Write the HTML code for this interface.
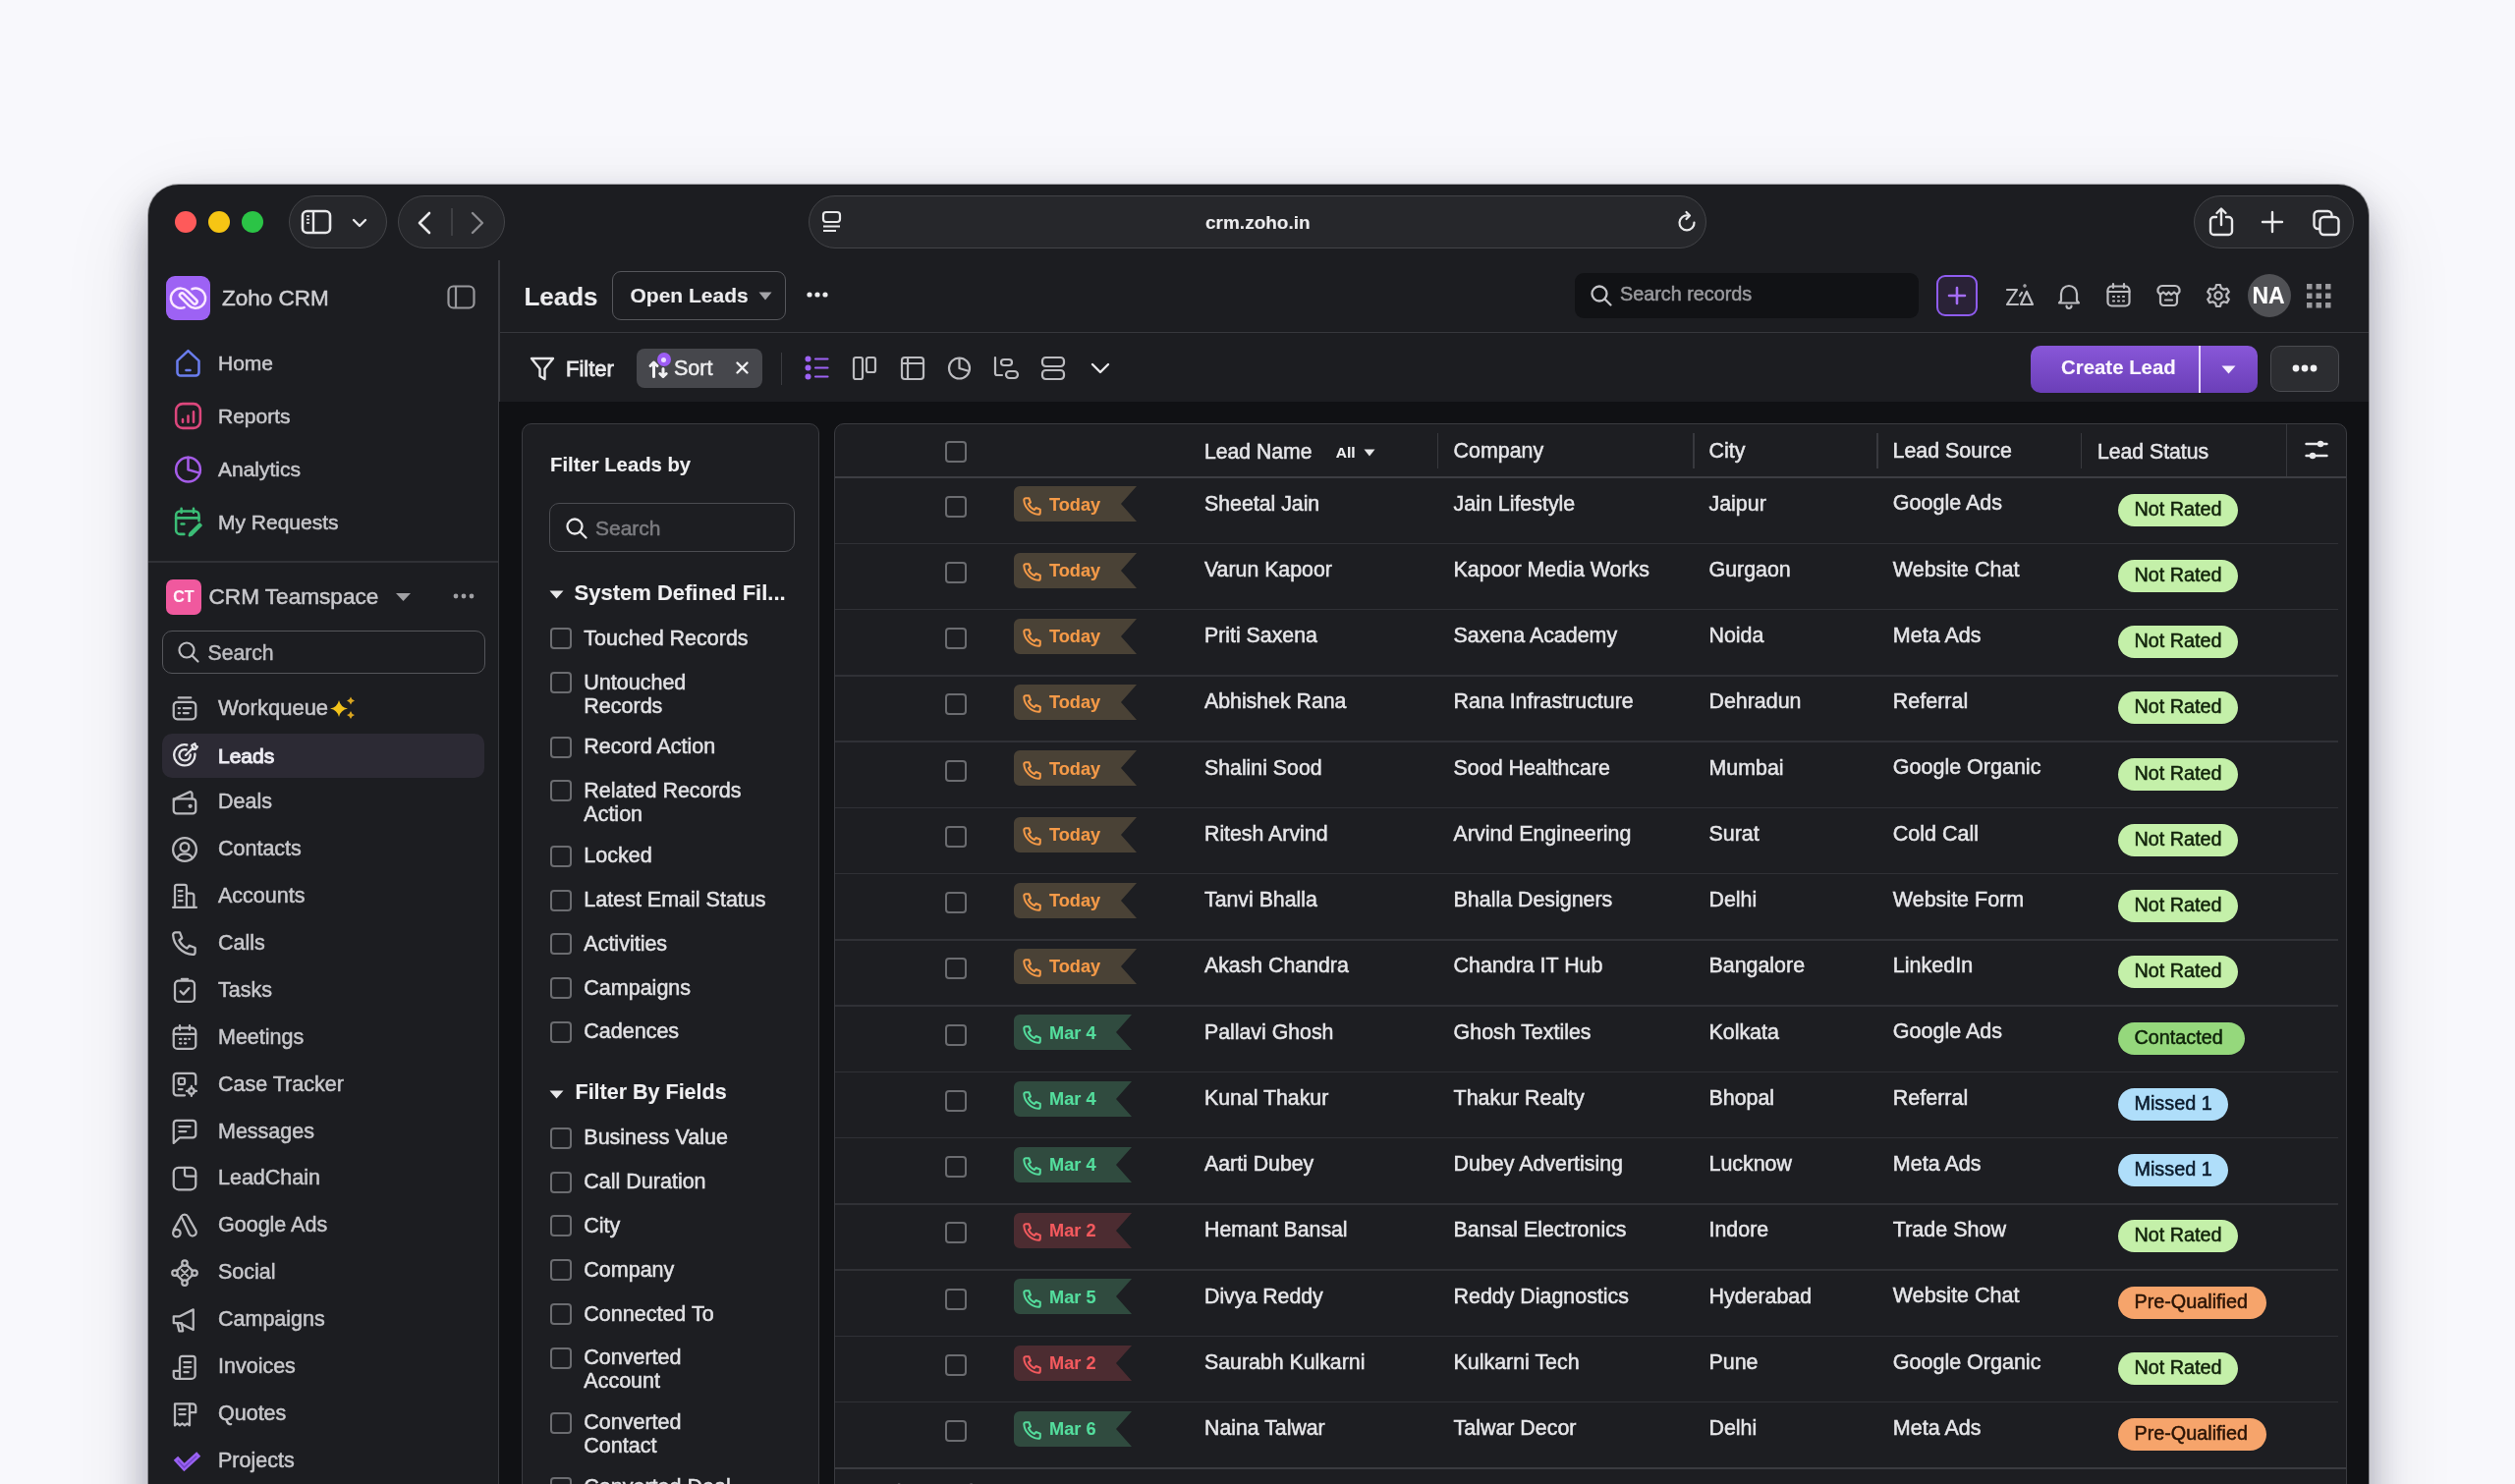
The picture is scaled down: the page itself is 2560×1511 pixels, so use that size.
<!DOCTYPE html>
<html><head><meta charset="utf-8">
<style>
*{box-sizing:border-box;margin:0;padding:0}
html,body{width:2560px;height:1511px;overflow:hidden}
body{will-change:transform;background:#f8f8fb;font-family:"Liberation Sans",sans-serif;position:relative;color:#d4d4d8}
.a{position:absolute}
.win{left:150.5px;top:188px;width:2260.5px;height:1500px;background:#1c1d21;border-radius:31px 31px 0 0;box-shadow:0 0 0 1px rgba(0,0,0,.3),0 20px 38px rgba(20,20,40,.32),0 30px 90px rgba(20,20,40,.12)}
.pill{background:#26272b;border:1.5px solid #434448;border-radius:27px}
svg{position:absolute;overflow:visible}
.t{position:absolute;white-space:nowrap;line-height:1;-webkit-text-stroke:0.5px currentColor}
.cb{position:absolute;width:22px;height:22px;border:2px solid #6b6c70;border-radius:4px}
.root{position:absolute;left:0;top:0;width:2560px;height:1511px;overflow:hidden;background:#f8f8fc}
</style></head><body>
<div class="root">
<div class="a win"></div>
<div class="a" style="left:177.5px;top:215px;width:22px;height:22px;border-radius:50%;background:#fe5a5a"></div>
<div class="a" style="left:211.5px;top:215px;width:22px;height:22px;border-radius:50%;background:#f6c514"></div>
<div class="a" style="left:246px;top:215px;width:22px;height:22px;border-radius:50%;background:#2bc446"></div>
<div class="a pill" style="left:294px;top:199px;width:100px;height:54px"></div>
<div class="a pill" style="left:405px;top:199px;width:109px;height:54px"></div>
<div class="a pill" style="left:823px;top:199px;width:914px;height:54px"></div>
<div class="a pill" style="left:2233px;top:199px;width:163px;height:54px"></div>
<svg style="left:306px;top:213px;" width="32" height="26" viewBox="0 0 32 26" fill="none"><rect x="2" y="2" width="28" height="22" rx="4.5" stroke="#e8e8ea" stroke-width="2.6"/><line x1="13" y1="2" x2="13" y2="24" stroke="#e8e8ea" stroke-width="2.4"/><line x1="6" y1="7" x2="9" y2="7" stroke="#e8e8ea" stroke-width="1.6"/><line x1="6" y1="10.5" x2="9" y2="10.5" stroke="#e8e8ea" stroke-width="1.6"/><line x1="6" y1="14" x2="9" y2="14" stroke="#e8e8ea" stroke-width="1.6"/></svg>
<svg style="left:358px;top:222px;" width="16" height="10" viewBox="0 0 16 10" fill="none"><path d="M2 2 L8 8 L14 2" stroke="#e8e8ea" stroke-width="2.4" stroke-linecap="round" stroke-linejoin="round"/></svg>
<svg style="left:424px;top:215px;" width="16" height="24" viewBox="0 0 16 24" fill="none"><path d="M13 2 L3 12 L13 22" stroke="#e8e8ea" stroke-width="2.6" stroke-linecap="round" stroke-linejoin="round"/></svg>
<div class="a" style="left:459px;top:212px;width:1.5px;height:28px;background:#3e3f43"></div>
<svg style="left:478px;top:215px;" width="16" height="24" viewBox="0 0 16 24" fill="none"><path d="M3 2 L13 12 L3 22" stroke="#8c8c90" stroke-width="2.4" stroke-linecap="round" stroke-linejoin="round"/></svg>
<svg style="left:835px;top:214px;" width="24" height="24" viewBox="0 0 24 24" fill="none"><rect x="3" y="2" width="17" height="10" rx="3" stroke="#e8e8ea" stroke-width="2.2"/><line x1="3" y1="16.5" x2="20" y2="16.5" stroke="#e8e8ea" stroke-width="2"/><line x1="3" y1="21" x2="16" y2="21" stroke="#e8e8ea" stroke-width="2"/></svg>
<div class="t" style="left:1227.0px;top:216.9px;font-size:19px;color:#ececee;font-weight:700;-webkit-text-stroke:0.1px currentColor;">crm.zoho.in</div>
<svg style="left:1707px;top:215px;" width="22" height="24" viewBox="0 0 22 24" fill="none"><path d="M17.5 11.5 A7.5 7.5 0 1 1 11 4.5" stroke="#e8e8ea" stroke-width="2.2" stroke-linecap="round"/><path d="M9.5 1 L13 4.5 L9.5 8" stroke="#e8e8ea" stroke-width="2.2" stroke-linecap="round" stroke-linejoin="round"/></svg>
<svg style="left:2247px;top:210px;" width="28" height="32" viewBox="0 0 28 32" fill="none"><path d="M9 11 H6.5 A3.5 3.5 0 0 0 3 14.5 V25.5 A3.5 3.5 0 0 0 6.5 29 H21.5 A3.5 3.5 0 0 0 25 25.5 V14.5 A3.5 3.5 0 0 0 21.5 11 H19" stroke="#e8e8ea" stroke-width="2.4" stroke-linecap="round"/><path d="M14 19 V3 M9.5 7 L14 2.5 L18.5 7" stroke="#e8e8ea" stroke-width="2.4" stroke-linecap="round" stroke-linejoin="round"/></svg>
<svg style="left:2302px;top:215px;" width="22" height="22" viewBox="0 0 22 22" fill="none"><path d="M11 1 V21 M1 11 H21" stroke="#e8e8ea" stroke-width="2.4" stroke-linecap="round"/></svg>
<svg style="left:2353px;top:213px;" width="30" height="28" viewBox="0 0 30 28" fill="none"><rect x="2.5" y="2" width="18" height="18" rx="4" stroke="#e8e8ea" stroke-width="2.4"/><rect x="8.5" y="8" width="19" height="18" rx="4" fill="#26272b" stroke="#e8e8ea" stroke-width="2.4"/></svg>
<div class="a" style="left:507px;top:265px;width:1.5px;height:1300px;background:#38393e"></div>
<div class="a" style="left:169px;top:281px;width:45px;height:45px;border-radius:9px;background:#9d62f4"></div>
<svg style="left:169px;top:281px;" width="45" height="45" viewBox="0 0 45 45" fill="none"><path d="M18.52 32.13 A10.1 10.1 0 1 1 22.04 15.56 L30.97 24.49 A2.36 2.36 0 0 1 27.63 27.83 L17.94 18.14 A2.36 2.36 0 0 0 14.60 21.48 L22.96 29.84 A10.1 10.1 0 1 0 26.48 13.27" stroke="#fbe8ff" stroke-width="2.5" stroke-linecap="round" stroke-linejoin="round" fill="none"/></svg>
<div class="t" style="left:226.0px;top:292.5px;font-size:22.5px;color:#cfcfd3;font-weight:400;">Zoho CRM</div>
<svg style="left:455px;top:290px;" width="29" height="25" viewBox="0 0 29 25" fill="none"><rect x="1.5" y="1.5" width="26" height="22" rx="5" stroke="#98989c" stroke-width="2.2"/><line x1="9" y1="2" x2="9" y2="23" stroke="#98989c" stroke-width="2.2"/></svg>
<svg style="left:175.0px;top:353.4px;" width="33" height="33" viewBox="0 0 24 24" fill="none"><g stroke="#6a7ded" stroke-width="1.85" stroke-linecap="round" stroke-linejoin="round" fill="none"><path d="M4 10.5 L12 3 L20 10.5 V19 A2.5 2.5 0 0 1 17.5 21.5 H6.5 A2.5 2.5 0 0 1 4 19 Z"/><path d="M10.5 17.5 H13.5"/></g></svg>
<div class="t" style="left:222.0px;top:359.4px;font-size:21px;color:#c8c8cc;font-weight:400;">Home</div>
<svg style="left:175.0px;top:407.2px;" width="33" height="33" viewBox="0 0 24 24" fill="none"><g stroke="#dc477c" stroke-width="1.85" stroke-linecap="round" stroke-linejoin="round" fill="none"><rect x="3" y="3" width="18" height="18" rx="5"/><path d="M8 16.5 V14.5 M12 16.5 V12 M16 16.5 V9"/></g></svg>
<div class="t" style="left:222.0px;top:413.2px;font-size:21px;color:#c8c8cc;font-weight:400;">Reports</div>
<svg style="left:175.0px;top:460.8px;" width="33" height="33" viewBox="0 0 24 24" fill="none"><g stroke="#a55ce8" stroke-width="1.85" stroke-linecap="round" stroke-linejoin="round" fill="none"><circle cx="12" cy="12.5" r="9"/><path d="M12 3.5 V12.5 L20.5 15"/></g></svg>
<div class="t" style="left:222.0px;top:466.8px;font-size:21px;color:#c8c8cc;font-weight:400;">Analytics</div>
<svg style="left:175.0px;top:514.8000000000001px;" width="33" height="33" viewBox="0 0 24 24" fill="none"><g stroke="#3bbd76" stroke-width="1.85" stroke-linecap="round" stroke-linejoin="round" fill="none"><path d="M20 11 V7 A3 3 0 0 0 17 4 H6 A3 3 0 0 0 3 7 V18 A3 3 0 0 0 6 21 H9"/><path d="M3 9 H20"/><path d="M7 2 V5 M16 2 V5"/><path d="M7 13.5 H9"/><path d="M20.5 13.5 L13.5 20.5 L13 22 L14.5 21.5 L21.5 14.5 Z"/></g></svg>
<div class="t" style="left:222.0px;top:520.8px;font-size:21px;color:#c8c8cc;font-weight:400;">My Requests</div>
<div class="a" style="left:151px;top:571px;width:356px;height:1.5px;background:#303136"></div>
<div class="a" style="left:169px;top:589.5px;width:36px;height:36px;border-radius:7px;background:#f0599e"></div>
<div class="t" style="left:176.2px;top:599.7px;font-size:16px;color:#fff4fa;font-weight:700;-webkit-text-stroke:0.1px currentColor;">CT</div>
<div class="t" style="left:212.5px;top:596.7px;font-size:22.6px;color:#c8c8cc;font-weight:400;">CRM Teamspace</div>
<svg style="left:402px;top:603px;" width="17" height="10" viewBox="0 0 17 10" fill="none"><path d="M1 1 H16 L8.5 9 Z" fill="#a0a0a4"/></svg>
<svg style="left:461px;top:604px;" width="22" height="6" viewBox="0 0 22 6" fill="none"><circle cx="3" cy="3" r="2.4" fill="#a0a0a4"/><circle cx="11" cy="3" r="2.4" fill="#a0a0a4"/><circle cx="19" cy="3" r="2.4" fill="#a0a0a4"/></svg>
<div class="a" style="left:165px;top:642px;width:329px;height:44px;border:1.5px solid #55565b;border-radius:10px"></div>
<svg style="left:180px;top:652px;" width="24" height="24" viewBox="0 0 24 24" fill="none"><circle cx="10" cy="10" r="7.5" stroke="#bdbdc1" stroke-width="2.2"/><path d="M15.5 15.5 L21.5 21.5" stroke="#bdbdc1" stroke-width="2.2" stroke-linecap="round"/></svg>
<div class="t" style="left:211.5px;top:653.5px;font-size:21.2px;color:#bdbdc1;font-weight:400;">Search</div>
<div class="a" style="left:165px;top:747px;width:328px;height:45px;border-radius:10px;background:#2c2a34"></div>
<svg style="left:173.3px;top:705.8px;" width="30" height="30" viewBox="0 0 24 24" fill="none"><g stroke="#b9b9bd" stroke-width="1.8" stroke-linecap="round" stroke-linejoin="round" fill="none"><rect x="3" y="7" width="18" height="14" rx="3"/><path d="M7 3.5 H17"/><path d="M7 12 H8 M11 12 H17 M7 16 H8 M11 16 H15"/></g></svg>
<div class="t" style="left:222.0px;top:709.8px;font-size:22px;color:#c8c8cc;font-weight:400;">Workqueue</div>
<svg style="left:173.5px;top:753.52px;" width="30" height="30" viewBox="0 0 24 24" fill="none"><g stroke="#e4e4e8" stroke-width="1.85" stroke-linecap="round" stroke-linejoin="round" fill="none"><path d="M19.5 11 A8.5 8.5 0 1 1 13 3.6"/><path d="M15.8 11.5 A4.5 4.5 0 1 1 12.5 7.5"/><path d="M12 12 L18 6"/><path d="M17 4 L19.5 2.5 L20 4.5 L21.5 5 L20 7 L18 7 Z"/></g></svg>
<div class="t" style="left:222.0px;top:758.5px;font-size:21px;color:#ecebf2;font-weight:400;-webkit-text-stroke:1px #ecebf2">Leads</div>
<svg style="left:173.3px;top:801.64px;" width="30" height="30" viewBox="0 0 24 24" fill="none"><g stroke="#b9b9bd" stroke-width="1.8" stroke-linecap="round" stroke-linejoin="round" fill="none"><path d="M3 9 V18.5 A2.5 2.5 0 0 0 5.5 21 H18.5 A2.5 2.5 0 0 0 21 18.5 V11.5 A2.5 2.5 0 0 0 18.5 9 H5.5 A2.5 2.5 0 0 0 3 11.5"/><path d="M4 9 L16 3.5 A1.5 1.5 0 0 1 18 5 V9"/><circle cx="16.5" cy="15" r="0.8"/></g></svg>
<div class="t" style="left:222.0px;top:806.0px;font-size:21.5px;color:#c8c8cc;font-weight:400;">Deals</div>
<svg style="left:173.3px;top:849.56px;" width="30" height="30" viewBox="0 0 24 24" fill="none"><g stroke="#b9b9bd" stroke-width="1.8" stroke-linecap="round" stroke-linejoin="round" fill="none"><circle cx="12" cy="12" r="9.5"/><circle cx="12" cy="10" r="3.5"/><path d="M6 18.5 A6.5 5 0 0 1 18 18.5"/></g></svg>
<div class="t" style="left:222.0px;top:854.0px;font-size:21.5px;color:#c8c8cc;font-weight:400;">Contacts</div>
<svg style="left:173.3px;top:897.4799999999999px;" width="30" height="30" viewBox="0 0 24 24" fill="none"><g stroke="#b9b9bd" stroke-width="1.8" stroke-linecap="round" stroke-linejoin="round" fill="none"><path d="M4 21.5 V4.5 A1.5 1.5 0 0 1 5.5 3 H12 A1.5 1.5 0 0 1 13.5 4.5 V21.5"/><path d="M13.5 10 H17.5 A2 2 0 0 1 19.5 12 V21.5"/><path d="M2.5 21.5 H21.5"/><path d="M7 8 H10 M7 12 H10 M7 16 H10"/></g></svg>
<div class="t" style="left:222.0px;top:901.9px;font-size:21.5px;color:#c8c8cc;font-weight:400;">Accounts</div>
<svg style="left:173.3px;top:945.4px;" width="30" height="30" viewBox="0 0 24 24" fill="none"><g stroke="#b9b9bd" stroke-width="1.8" stroke-linecap="round" stroke-linejoin="round" fill="none"><path d="M4.5 3.5 H8 L9.8 8.2 L7.5 10 C8.6 12.5 11.2 15.2 14 16.5 L15.8 14.2 L20.5 16 V19.5 A2 2 0 0 1 18.5 21.5 C10 21 3 14 2.5 5.5 A2 2 0 0 1 4.5 3.5 Z"/></g></svg>
<div class="t" style="left:222.0px;top:949.8px;font-size:21.5px;color:#c8c8cc;font-weight:400;">Calls</div>
<svg style="left:173.3px;top:993.3199999999999px;" width="30" height="30" viewBox="0 0 24 24" fill="none"><g stroke="#b9b9bd" stroke-width="1.8" stroke-linecap="round" stroke-linejoin="round" fill="none"><rect x="4" y="4.5" width="16" height="17" rx="3"/><path d="M9.5 3 H14.5"/><path d="M8.5 13 L11 15.5 L15.5 10.5"/></g></svg>
<div class="t" style="left:222.0px;top:997.7px;font-size:21.5px;color:#c8c8cc;font-weight:400;">Tasks</div>
<svg style="left:173.3px;top:1041.24px;" width="30" height="30" viewBox="0 0 24 24" fill="none"><g stroke="#b9b9bd" stroke-width="1.8" stroke-linecap="round" stroke-linejoin="round" fill="none"><rect x="3" y="4.5" width="18" height="17" rx="3"/><path d="M3 9.5 H21"/><path d="M8 2.5 V6 M16 2.5 V6"/><path d="M8 13.5 H9 M12 13.5 H13 M15.5 13.5 H16 M8 17 H9 M12 17 H13"/></g></svg>
<div class="t" style="left:222.0px;top:1045.6px;font-size:21.5px;color:#c8c8cc;font-weight:400;">Meetings</div>
<svg style="left:173.3px;top:1089.16px;" width="30" height="30" viewBox="0 0 24 24" fill="none"><g stroke="#b9b9bd" stroke-width="1.8" stroke-linecap="round" stroke-linejoin="round" fill="none"><path d="M21 12 V5.5 A2.5 2.5 0 0 0 18.5 3 H5.5 A2.5 2.5 0 0 0 3 5.5 V18.5 A2.5 2.5 0 0 0 5.5 21 H12"/><rect x="7" y="7" width="5" height="5" rx="1"/><path d="M7 16 H10"/><circle cx="17.5" cy="17.5" r="2.2"/><path d="M17.5 13.5 V14.5 M17.5 20.5 V21.5 M13.5 17.5 H14.5 M20.5 17.5 H21.5"/></g></svg>
<div class="t" style="left:222.0px;top:1093.6px;font-size:21.5px;color:#c8c8cc;font-weight:400;">Case Tracker</div>
<svg style="left:173.3px;top:1137.0800000000002px;" width="30" height="30" viewBox="0 0 24 24" fill="none"><g stroke="#b9b9bd" stroke-width="1.8" stroke-linecap="round" stroke-linejoin="round" fill="none"><path d="M3 5.5 A2.5 2.5 0 0 1 5.5 3 H18.5 A2.5 2.5 0 0 1 21 5.5 V14.5 A2.5 2.5 0 0 1 18.5 17 H8 L3 21.5 Z"/><path d="M7.5 8 H16.5 M7.5 12 H13"/></g></svg>
<div class="t" style="left:222.0px;top:1141.5px;font-size:21.5px;color:#c8c8cc;font-weight:400;">Messages</div>
<svg style="left:173.3px;top:1185.0px;" width="30" height="30" viewBox="0 0 24 24" fill="none"><g stroke="#b9b9bd" stroke-width="1.8" stroke-linecap="round" stroke-linejoin="round" fill="none"><rect x="3" y="3" width="18" height="18" rx="4"/><path d="M12 3 V8.5 A1.5 1.5 0 0 0 13.5 10 H21"/></g></svg>
<div class="t" style="left:222.0px;top:1189.4px;font-size:21.5px;color:#c8c8cc;font-weight:400;">LeadChain</div>
<svg style="left:173.3px;top:1232.92px;" width="30" height="30" viewBox="0 0 24 24" fill="none"><g stroke="#b9b9bd" stroke-width="1.8" stroke-linecap="round" stroke-linejoin="round" fill="none"><path d="M9.2 4.5 A3 3 0 0 1 14.6 4.5 L21 15.8 A3 3 0 0 1 15.8 18.8 Z"/><path d="M9.2 4.5 L3 15.5"/><circle cx="5.5" cy="18" r="3"/></g></svg>
<div class="t" style="left:222.0px;top:1237.3px;font-size:21.5px;color:#c8c8cc;font-weight:400;">Google Ads</div>
<svg style="left:173.3px;top:1280.8400000000001px;" width="30" height="30" viewBox="0 0 24 24" fill="none"><g stroke="#b9b9bd" stroke-width="1.8" stroke-linecap="round" stroke-linejoin="round" fill="none"><circle cx="12" cy="4" r="2.2"/><circle cx="12" cy="20" r="2.2"/><circle cx="4" cy="12" r="2.2"/><circle cx="20" cy="12" r="2.2"/><path d="M10.5 5.5 L5.5 10.5 M13.5 5.5 L18.5 10.5 M5.5 13.5 L10.5 18.5 M18.5 13.5 L13.5 18.5"/><path d="M9.5 9.5 L14.5 14.5 M14.5 9.5 L9.5 14.5" stroke-width="1.6"/></g></svg>
<div class="t" style="left:222.0px;top:1285.2px;font-size:21.5px;color:#c8c8cc;font-weight:400;">Social</div>
<svg style="left:173.3px;top:1328.7600000000002px;" width="30" height="30" viewBox="0 0 24 24" fill="none"><g stroke="#b9b9bd" stroke-width="1.8" stroke-linecap="round" stroke-linejoin="round" fill="none"><path d="M3 9 H8 L19 3.5 V20 L8 14.5 H3 Z"/><path d="M6 14.5 L7.5 21 H10.5 L9.5 14.5"/></g></svg>
<div class="t" style="left:222.0px;top:1333.2px;font-size:21.5px;color:#c8c8cc;font-weight:400;">Campaigns</div>
<svg style="left:173.3px;top:1376.68px;" width="30" height="30" viewBox="0 0 24 24" fill="none"><g stroke="#b9b9bd" stroke-width="1.8" stroke-linecap="round" stroke-linejoin="round" fill="none"><path d="M8 20 V5 A2 2 0 0 1 10 3 H18.5 A2 2 0 0 1 20.5 5 V18.5 A3 3 0 0 1 17.5 21.5 H5.5 A2.5 2.5 0 0 1 3 19 V15 H8"/><path d="M11.5 8 H17 M11.5 12 H17 M11.5 16 H15"/></g></svg>
<div class="t" style="left:222.0px;top:1381.1px;font-size:21.5px;color:#c8c8cc;font-weight:400;">Invoices</div>
<svg style="left:173.3px;top:1424.6000000000001px;" width="30" height="30" viewBox="0 0 24 24" fill="none"><g stroke="#b9b9bd" stroke-width="1.8" stroke-linecap="round" stroke-linejoin="round" fill="none"><path d="M4 3.5 H16 V21 L14 19.5 L12 21 L10 19.5 L8 21 L6 19.5 L4 21 Z"/><path d="M16 3.5 H18.5 A2.5 2.5 0 0 1 21 6 V10.5 H16"/><path d="M7.5 8 H12.5 M7.5 12 H12.5"/></g></svg>
<div class="t" style="left:222.0px;top:1429.0px;font-size:21.5px;color:#c8c8cc;font-weight:400;">Quotes</div>
<svg style="left:334px;top:709px;" width="30" height="24" viewBox="0 0 30 24" fill="none"><path d="M11 4 Q12.5 11 20 12.5 Q12.5 14 11 21 Q9.5 14 2 12.5 Q9.5 11 11 4 Z" fill="#f2c21b"/><path d="M23 0.5 Q23.8 3.7 27 4.5 Q23.8 5.3 23 8.5 Q22.2 5.3 19 4.5 Q22.2 3.7 23 0.5 Z" fill="#d9a520"/><path d="M23 15 Q23.8 18.2 27 19 Q23.8 19.8 23 23 Q22.2 19.8 19 19 Q22.2 18.2 23 15 Z" fill="#d9a520"/></svg>
<svg style="left:174.5px;top:1475.62px;" width="30" height="26" viewBox="0 0 30 26" fill="none"><path d="M6 11 L12.5 18 L25 6.5" stroke="#9a62f2" stroke-width="6" stroke-linejoin="miter" stroke-linecap="square"/><path d="M6 11 L12.5 18 L25 6.5" stroke="#7444cc" stroke-width="1.6" stroke-linejoin="miter"/></svg>
<div class="t" style="left:222.0px;top:1476.9px;font-size:21.5px;color:#c8c8cc;font-weight:400;">Projects</div>
<div class="a" style="left:507.5px;top:337.5px;width:1903.5px;height:1.5px;background:#36373c"></div>
<div class="t" style="left:533.4px;top:289.2px;font-size:26px;color:#ececee;font-weight:700;-webkit-text-stroke:0.1px currentColor;">Leads</div>
<div class="a" style="left:622.5px;top:275.5px;width:177px;height:50px;border:1.5px solid #55565b;border-radius:9px"></div>
<div class="t" style="left:641.5px;top:289.9px;font-size:21px;color:#ececee;font-weight:700;-webkit-text-stroke:0.1px currentColor;">Open Leads</div>
<svg style="left:772px;top:297px;" width="14" height="9" viewBox="0 0 14 9" fill="none"><path d="M0.5 0.5 H13.5 L7 8.5 Z" fill="#a4a4a8"/></svg>
<svg style="left:821px;top:297px;" width="22" height="6" viewBox="0 0 22 6" fill="none"><circle cx="3" cy="3" r="2.6" fill="#ececee"/><circle cx="11" cy="3" r="2.6" fill="#ececee"/><circle cx="19" cy="3" r="2.6" fill="#ececee"/></svg>
<div class="a" style="left:1603px;top:277.5px;width:350px;height:46.5px;border-radius:9px;background:#111215"></div>
<svg style="left:1618px;top:289px;" width="24" height="24" viewBox="0 0 24 24" fill="none"><circle cx="10" cy="10" r="7.5" stroke="#c4c4c8" stroke-width="2.3"/><path d="M15.5 15.5 L21.5 21.5" stroke="#c4c4c8" stroke-width="2.3" stroke-linecap="round"/></svg>
<div class="t" style="left:1649.0px;top:290.2px;font-size:19.8px;color:#9a9a9e;font-weight:400;">Search records</div>
<div class="a" style="left:1971px;top:280px;width:42px;height:42px;border:2px solid #8f5cf0;border-radius:9px;background:#2a2237"></div>
<svg style="left:1982px;top:291px;" width="20" height="20" viewBox="0 0 20 20" fill="none"><path d="M10 2 V18 M2 10 H18" stroke="#a56ef7" stroke-width="2.6" stroke-linecap="round"/></svg>
<svg style="left:2040px;top:287px;" width="32" height="26" viewBox="0 0 32 26" fill="none"><g stroke="#bdbdc1" stroke-width="2.2" fill="none" stroke-linecap="round" stroke-linejoin="round"><path d="M3 8 H13 L3 23 H14"/><path d="M18 11 L16 14"/><path d="M23 10 L17 23 H29 Z"/><circle cx="21" cy="4" r="0.6"/></g></svg>
<svg style="left:2093px;top:287px;" width="26" height="28" viewBox="0 0 26 28" fill="none"><g stroke="#bdbdc1" stroke-width="2.2" fill="none" stroke-linecap="round" stroke-linejoin="round"><path d="M5 19 V12 A8 8 0 0 1 21 12 V19 L23 21.5 H3 Z"/><path d="M10.5 24.5 A2.5 2.5 0 0 0 15.5 24.5"/></g></svg>
<svg style="left:2143px;top:287px;" width="27" height="27" viewBox="0 0 27 27" fill="none"><g stroke="#bdbdc1" stroke-width="2.2" fill="none" stroke-linecap="round"><rect x="2.5" y="4.5" width="22" height="20" rx="4"/><path d="M8 2 V6 M19 2 V6 M2.5 10 H24.5"/><path d="M8 15 H9 M13 15 H14 M18 15 H19 M8 19.5 H9 M13 19.5 H14 M18 19.5 H19"/></g></svg>
<svg style="left:2194px;top:287px;" width="27" height="27" viewBox="0 0 27 27" fill="none"><g stroke="#bdbdc1" stroke-width="2.2" fill="none" stroke-linecap="round" stroke-linejoin="round"><path d="M5 12 V20.5 A3.5 3.5 0 0 0 8.5 24 H18.5 A3.5 3.5 0 0 0 22 20.5 V12"/><path d="M2.5 9 A4.5 4.5 0 0 1 7 4 H20 A4.5 4.5 0 0 1 24.5 9 V10 L22 13 L19 10.5 L16 13 L13.5 10.5 L11 13 L8 10.5 L5 13 L2.5 10 Z"/><path d="M10 18.5 H17"/></g></svg>
<svg style="left:2245px;top:288px;" width="26" height="26" viewBox="0 0 26 26" fill="none"><g stroke="#bdbdc1" stroke-width="2.2" fill="none" stroke-linejoin="round"><path d="M11 2 H15 L15.8 5.2 L18.6 6.8 L21.8 5.9 L23.8 9.3 L21.4 11.6 V14.4 L23.8 16.7 L21.8 20.1 L18.6 19.2 L15.8 20.8 L15 24 H11 L10.2 20.8 L7.4 19.2 L4.2 20.1 L2.2 16.7 L4.6 14.4 V11.6 L2.2 9.3 L4.2 5.9 L7.4 6.8 L10.2 5.2 Z"/><circle cx="13" cy="13" r="3.6"/></g></svg>
<div class="a" style="left:2287.5px;top:279px;width:44px;height:44px;border-radius:50%;background:#505155"></div>
<div class="t" style="left:2292.5px;top:290.0px;font-size:23px;color:#ffffff;font-weight:700;-webkit-text-stroke:0.1px currentColor;">NA</div>
<svg style="left:2348px;top:289px;" width="25" height="25" viewBox="0 0 25 25" fill="none"><rect x="0.0" y="0.0" width="5.5" height="5.5" fill="#9a9a9e"/><rect x="9.5" y="0.0" width="5.5" height="5.5" fill="#9a9a9e"/><rect x="19.0" y="0.0" width="5.5" height="5.5" fill="#9a9a9e"/><rect x="0.0" y="9.5" width="5.5" height="5.5" fill="#9a9a9e"/><rect x="9.5" y="9.5" width="5.5" height="5.5" fill="#9a9a9e"/><rect x="19.0" y="9.5" width="5.5" height="5.5" fill="#9a9a9e"/><rect x="0.0" y="19.0" width="5.5" height="5.5" fill="#9a9a9e"/><rect x="9.5" y="19.0" width="5.5" height="5.5" fill="#9a9a9e"/><rect x="19.0" y="19.0" width="5.5" height="5.5" fill="#9a9a9e"/></svg>
<svg style="left:538px;top:362px;" width="28" height="27" viewBox="0 0 28 27" fill="none"><path d="M3 3 H25 L16.5 13.5 V24 L11.5 21 V13.5 Z" stroke="#e6e6e8" stroke-width="2.4" stroke-linejoin="round" stroke-linecap="round"/></svg>
<div class="t" style="left:576.0px;top:364.6px;font-size:22px;color:#e8e8ea;font-weight:400;-webkit-text-stroke:0.8px #e8e8ea">Filter</div>
<div class="a" style="left:648px;top:355px;width:128px;height:40px;border-radius:8px;background:#46474c"></div>
<svg style="left:659px;top:363px;" width="24" height="24" viewBox="0 0 24 24" fill="none"><g stroke="#f0f0f2" stroke-width="3" stroke-linecap="round" stroke-linejoin="round" fill="none"><path d="M6.5 20.5 V6 M3 9.5 L6.5 6 L10 9.5"/><path d="M16 12.5 V20.5 M12.8 17.5 L16 20.5 L19.2 17.5"/></g></svg>
<div class="a" style="left:668.5px;top:359px;width:14px;height:14px;border-radius:50%;background:#9c5cf4"></div>
<div class="a" style="left:673px;top:363.5px;width:5px;height:5px;border-radius:50%;background:#e9dcff"></div>
<div class="t" style="left:686.0px;top:364.8px;font-size:21.5px;color:#ececee;font-weight:400;">Sort</div>
<svg style="left:749px;top:368px;" width="13" height="13" viewBox="0 0 13 13" fill="none"><path d="M1.5 1.5 L11.5 11.5 M11.5 1.5 L1.5 11.5" stroke="#f0f0f2" stroke-width="2.4" stroke-linecap="round"/></svg>
<div class="a" style="left:794.5px;top:358.5px;width:1.5px;height:33px;background:#3a3b40"></div>
<svg style="left:819px;top:362px;" width="26" height="25" viewBox="0 0 26 25" fill="none"><g fill="#9d62f4"><circle cx="3.5" cy="3.5" r="3"/><circle cx="3.5" cy="12.5" r="3"/><circle cx="3.5" cy="21.5" r="3"/></g><g stroke="#9d62f4" stroke-width="2.2" stroke-linecap="round"><path d="M11 3.5 H23.5 M11 12.5 H23.5 M11 21.5 H23.5"/></g></svg>
<svg style="left:867px;top:362px;" width="26" height="26" viewBox="0 0 26 26" fill="none"><g stroke="#bcbcc0" stroke-width="2.2" fill="none"><rect x="2" y="2" width="9" height="22" rx="2"/><rect x="15" y="2" width="9" height="15" rx="2"/></g></svg>
<svg style="left:916px;top:362px;" width="26" height="26" viewBox="0 0 26 26" fill="none"><g stroke="#bcbcc0" stroke-width="2.2" fill="none"><rect x="2" y="2" width="22" height="22" rx="3"/><path d="M2 8 H24 M8 2 V24"/></g></svg>
<svg style="left:964px;top:362px;" width="26" height="26" viewBox="0 0 26 26" fill="none"><g stroke="#bcbcc0" stroke-width="2.2" fill="none" stroke-linejoin="round"><circle cx="12.5" cy="13" r="10.5"/><path d="M12.5 2.5 V13 L22.5 16"/><path d="M12.5 13 L21 7" stroke-width="0"/></g></svg>
<svg style="left:1010px;top:362px;" width="28" height="26" viewBox="0 0 28 26" fill="none"><g stroke="#bcbcc0" stroke-width="2.2" fill="none" stroke-linecap="round"><path d="M3 2 V18 A2 2 0 0 0 5 20 H10"/><rect x="9" y="4" width="11" height="6" rx="3"/><rect x="14" y="16" width="12" height="7" rx="3.5"/></g></svg>
<svg style="left:1059px;top:362px;" width="26" height="26" viewBox="0 0 26 26" fill="none"><g stroke="#bcbcc0" stroke-width="2.2" fill="none"><rect x="2" y="2" width="22" height="9" rx="3.5"/><rect x="2" y="15" width="22" height="9" rx="3.5"/></g></svg>
<svg style="left:1110px;top:369px;" width="20" height="12" viewBox="0 0 20 12" fill="none"><path d="M2 2 L10 10 L18 2" stroke="#eaeaec" stroke-width="2.4" stroke-linecap="round" stroke-linejoin="round"/></svg>
<div class="a" style="left:2067px;top:351.5px;width:231px;height:48px;border-radius:10px;background:linear-gradient(#8857d8,#6b3fb8)"></div>
<div class="a" style="left:2237.5px;top:351.5px;width:2px;height:48px;background:#e6d8fa"></div>
<div class="t" style="left:2098.0px;top:364.1px;font-size:20.4px;color:#fbf6ff;font-weight:700;-webkit-text-stroke:0.1px currentColor;">Create Lead</div>
<svg style="left:2261px;top:372px;" width="15" height="9" viewBox="0 0 15 9" fill="none"><path d="M0.5 0.5 H14.5 L7.5 8.5 Z" fill="#f6efff"/></svg>
<div class="a" style="left:2311px;top:352px;width:70px;height:47px;border:1.5px solid #4a4b50;border-radius:10px;background:#2c2d31"></div>
<svg style="left:2333px;top:371px;" width="26" height="8" viewBox="0 0 26 8" fill="none"><circle cx="4" cy="4" r="3.4" fill="#f2f2f4"/><circle cx="13" cy="4" r="3.4" fill="#f2f2f4"/><circle cx="22" cy="4" r="3.4" fill="#f2f2f4"/></svg>
<div class="a" style="left:508px;top:409px;width:1903px;height:1200px;background:#101114"></div>
<div class="a" style="left:531px;top:431px;width:302.5px;height:1200px;background:#1d1e22;border:1.5px solid #3a3b40;border-radius:10px"></div>
<div class="a" style="left:848.5px;top:431px;width:1540px;height:1200px;background:#1d1e22;border:1.5px solid #3a3b40;border-radius:10px"></div>
<div class="t" style="left:560.0px;top:463.0px;font-size:20.3px;color:#f0f0f2;font-weight:700;-webkit-text-stroke:0.1px currentColor;">Filter Leads by</div>
<div class="a" style="left:559px;top:512px;width:250px;height:50px;border:1.5px solid #4b4c51;border-radius:10px"></div>
<svg style="left:575px;top:526px;" width="24" height="24" viewBox="0 0 24 24" fill="none"><circle cx="10" cy="10" r="7.5" stroke="#e8e8ea" stroke-width="2.3"/><path d="M15.5 15.5 L21.5 21.5" stroke="#e8e8ea" stroke-width="2.3" stroke-linecap="round"/></svg>
<div class="t" style="left:606.0px;top:526.5px;font-size:21px;color:#7c7c80;font-weight:400;">Search</div>
<svg style="left:558.5px;top:601px;" width="15" height="9" viewBox="0 0 15 9" fill="none"><path d="M0.5 0.5 H14.5 L7.5 8.5 Z" fill="#e8e8ea"/></svg>
<div class="t" style="left:584.5px;top:592.6px;font-size:22px;color:#f0f0f2;font-weight:700;-webkit-text-stroke:0.1px currentColor;">System Defined Fil...</div>
<div class="cb" style="left:559.5px;top:639.2px;width:22px;height:22px"></div>
<div class="t" style="left:594.3px;top:639.5px;font-size:21.5px;color:#e2e2e5;font-weight:400;">Touched Records</div>
<div class="cb" style="left:559.5px;top:684.4px;width:22px;height:22px"></div>
<div class="t" style="left:594.3px;top:684.7px;font-size:21.5px;color:#e2e2e5;font-weight:400;">Untouched</div>
<div class="t" style="left:594.3px;top:709.1px;font-size:21.5px;color:#e2e2e5;font-weight:400;">Records</div>
<div class="cb" style="left:559.5px;top:750.1px;width:22px;height:22px"></div>
<div class="t" style="left:594.3px;top:750.4px;font-size:21.5px;color:#e2e2e5;font-weight:400;">Record Action</div>
<div class="cb" style="left:559.5px;top:794.3px;width:22px;height:22px"></div>
<div class="t" style="left:594.3px;top:794.6px;font-size:21.5px;color:#e2e2e5;font-weight:400;">Related Records</div>
<div class="t" style="left:594.3px;top:819.0px;font-size:21.5px;color:#e2e2e5;font-weight:400;">Action</div>
<div class="cb" style="left:559.5px;top:860.6px;width:22px;height:22px"></div>
<div class="t" style="left:594.3px;top:860.9px;font-size:21.5px;color:#e2e2e5;font-weight:400;">Locked</div>
<div class="cb" style="left:559.5px;top:905.5px;width:22px;height:22px"></div>
<div class="t" style="left:594.3px;top:905.8px;font-size:21.5px;color:#e2e2e5;font-weight:400;">Latest Email Status</div>
<div class="cb" style="left:559.5px;top:950.3px;width:22px;height:22px"></div>
<div class="t" style="left:594.3px;top:950.6px;font-size:21.5px;color:#e2e2e5;font-weight:400;">Activities</div>
<div class="cb" style="left:559.5px;top:995.2px;width:22px;height:22px"></div>
<div class="t" style="left:594.3px;top:995.5px;font-size:21.5px;color:#e2e2e5;font-weight:400;">Campaigns</div>
<div class="cb" style="left:559.5px;top:1040.1px;width:22px;height:22px"></div>
<div class="t" style="left:594.3px;top:1040.4px;font-size:21.5px;color:#e2e2e5;font-weight:400;">Cadences</div>
<div class="cb" style="left:559.5px;top:1148.1px;width:22px;height:22px"></div>
<div class="t" style="left:594.3px;top:1148.4px;font-size:21.5px;color:#e2e2e5;font-weight:400;">Business Value</div>
<div class="cb" style="left:559.5px;top:1193.1px;width:22px;height:22px"></div>
<div class="t" style="left:594.3px;top:1193.4px;font-size:21.5px;color:#e2e2e5;font-weight:400;">Call Duration</div>
<div class="cb" style="left:559.5px;top:1237.2px;width:22px;height:22px"></div>
<div class="t" style="left:594.3px;top:1237.5px;font-size:21.5px;color:#e2e2e5;font-weight:400;">City</div>
<div class="cb" style="left:559.5px;top:1282.2px;width:22px;height:22px"></div>
<div class="t" style="left:594.3px;top:1282.5px;font-size:21.5px;color:#e2e2e5;font-weight:400;">Company</div>
<div class="cb" style="left:559.5px;top:1327.3px;width:22px;height:22px"></div>
<div class="t" style="left:594.3px;top:1327.6px;font-size:21.5px;color:#e2e2e5;font-weight:400;">Connected To</div>
<div class="cb" style="left:559.5px;top:1371.7px;width:22px;height:22px"></div>
<div class="t" style="left:594.3px;top:1372.0px;font-size:21.5px;color:#e2e2e5;font-weight:400;">Converted</div>
<div class="t" style="left:594.3px;top:1396.4px;font-size:21.5px;color:#e2e2e5;font-weight:400;">Account</div>
<div class="cb" style="left:559.5px;top:1437.5px;width:22px;height:22px"></div>
<div class="t" style="left:594.3px;top:1437.8px;font-size:21.5px;color:#e2e2e5;font-weight:400;">Converted</div>
<div class="t" style="left:594.3px;top:1462.2px;font-size:21.5px;color:#e2e2e5;font-weight:400;">Contact</div>
<div class="cb" style="left:559.5px;top:1503.5px;width:22px;height:22px"></div>
<div class="t" style="left:594.3px;top:1503.8px;font-size:21.5px;color:#e2e2e5;font-weight:400;">Converted Deal</div>
<svg style="left:558.5px;top:1109.5px;" width="15" height="9" viewBox="0 0 15 9" fill="none"><path d="M0.5 0.5 H14.5 L7.5 8.5 Z" fill="#e8e8ea"/></svg>
<div class="t" style="left:585.5px;top:1101.8px;font-size:21.5px;color:#f0f0f2;font-weight:700;-webkit-text-stroke:0.1px currentColor;">Filter By Fields</div>
<div class="cb" style="left:962px;top:449px"></div>
<div class="t" style="left:1226.0px;top:448.5px;font-size:21.2px;color:#e6e6e9;font-weight:400;">Lead Name</div>
<div class="t" style="left:1359.7px;top:452.5px;font-size:15.5px;color:#f0f0f2;font-weight:700;-webkit-text-stroke:0.1px currentColor;">All</div>
<svg style="left:1387.5px;top:457px;" width="12" height="8" viewBox="0 0 12 8" fill="none"><path d="M0.5 0.5 H11.5 L6 7.5 Z" fill="#e8e8ea"/></svg>
<div class="a" style="left:1462.65px;top:441px;width:1.5px;height:36px;background:#38393e"></div>
<div class="a" style="left:1723.25px;top:441px;width:1.5px;height:36px;background:#38393e"></div>
<div class="a" style="left:1910.25px;top:441px;width:1.5px;height:36px;background:#38393e"></div>
<div class="a" style="left:2117.85px;top:441px;width:1.5px;height:36px;background:#38393e"></div>
<div class="a" style="left:2326.5px;top:432px;width:1.5px;height:54px;background:#36373c"></div>
<div class="t" style="left:1479.6px;top:448.7px;font-size:21.4px;color:#e6e6e9;font-weight:400;">Company</div>
<div class="t" style="left:1739.5px;top:448.7px;font-size:21.4px;color:#e6e6e9;font-weight:400;">City</div>
<div class="t" style="left:1926.5px;top:448.7px;font-size:21.4px;color:#e6e6e9;font-weight:400;">Lead Source</div>
<div class="t" style="left:2135.0px;top:448.8px;font-size:21.2px;color:#e6e6e9;font-weight:400;">Lead Status</div>
<svg style="left:2346px;top:448px;" width="24" height="20" viewBox="0 0 24 20" fill="none"><g stroke="#e8e8ea" stroke-width="2.4" stroke-linecap="round"><path d="M1.5 4 H13 M19 4 H22.5 M1.5 16 H5 M11 16 H22.5"/></g><circle cx="16" cy="4" r="3.2" fill="#e8e8ea"/><circle cx="8" cy="16" r="3.2" fill="#e8e8ea"/></svg>
<div class="a" style="left:849.5px;top:485px;width:1538px;height:2px;background:#3d3e43"></div>
<div class="cb" style="left:962px;top:504.6px"></div>
<svg style="left:1032px;top:495.2px;" width="125" height="36" viewBox="0 0 125 36" fill="none"><path d="M6 0 H125 L109 18 L125 36 H6 A6 6 0 0 1 0 30 V6 A6 6 0 0 1 6 0 Z" fill="#4a4236"/></svg>
<svg style="left:1040px;top:503.5px;" width="22" height="22" viewBox="0 0 24 24" fill="none"><path d="M4.5 3.5 H8 L9.8 8.2 L7.5 10 C8.6 12.5 11.2 15.2 14 16.5 L15.8 14.2 L20.5 16 V19.5 A2 2 0 0 1 18.5 21.5 C10 21 3 14 2.5 5.5 A2 2 0 0 1 4.5 3.5 Z" stroke="#f59a48" stroke-width="2.2" stroke-linejoin="round"/></svg>
<div class="t" style="left:1068.0px;top:504.6px;font-size:18.2px;color:#f59a48;font-weight:700;-webkit-text-stroke:0.1px currentColor;">Today</div>
<div class="t" style="left:1226.0px;top:502.6px;font-size:21.3px;color:#e6e6e9;font-weight:400;">Sheetal Jain</div>
<div class="t" style="left:1479.6px;top:502.5px;font-size:21.4px;color:#e6e6e9;font-weight:400;">Jain Lifestyle</div>
<div class="t" style="left:1739.5px;top:502.5px;font-size:21.4px;color:#e6e6e9;font-weight:400;">Jaipur</div>
<div class="t" style="left:1926.8px;top:502.4px;font-size:21.5px;color:#e6e6e9;font-weight:400;">Google Ads</div>
<div class="a" style="left:2155.5px;top:502.5px;width:122.5px;height:33px;border-radius:17px;background:#c4f0a9"></div>
<div class="t" style="left:2172.5px;top:508.5px;font-size:19.8px;color:#12230b;font-weight:400;">Not Rated</div>
<div class="a" style="left:849.5px;top:552.5px;width:1530px;height:1.5px;background:#303136"></div>
<div class="cb" style="left:962px;top:571.9px"></div>
<svg style="left:1032px;top:562.5px;" width="125" height="36" viewBox="0 0 125 36" fill="none"><path d="M6 0 H125 L109 18 L125 36 H6 A6 6 0 0 1 0 30 V6 A6 6 0 0 1 6 0 Z" fill="#4a4236"/></svg>
<svg style="left:1040px;top:570.8px;" width="22" height="22" viewBox="0 0 24 24" fill="none"><path d="M4.5 3.5 H8 L9.8 8.2 L7.5 10 C8.6 12.5 11.2 15.2 14 16.5 L15.8 14.2 L20.5 16 V19.5 A2 2 0 0 1 18.5 21.5 C10 21 3 14 2.5 5.5 A2 2 0 0 1 4.5 3.5 Z" stroke="#f59a48" stroke-width="2.2" stroke-linejoin="round"/></svg>
<div class="t" style="left:1068.0px;top:571.8px;font-size:18.2px;color:#f59a48;font-weight:700;-webkit-text-stroke:0.1px currentColor;">Today</div>
<div class="t" style="left:1226.0px;top:569.8px;font-size:21.3px;color:#e6e6e9;font-weight:400;">Varun Kapoor</div>
<div class="t" style="left:1479.6px;top:569.7px;font-size:21.4px;color:#e6e6e9;font-weight:400;">Kapoor Media Works</div>
<div class="t" style="left:1739.5px;top:569.7px;font-size:21.4px;color:#e6e6e9;font-weight:400;">Gurgaon</div>
<div class="t" style="left:1926.8px;top:569.7px;font-size:21.5px;color:#e6e6e9;font-weight:400;">Website Chat</div>
<div class="a" style="left:2155.5px;top:569.8px;width:122.5px;height:33px;border-radius:17px;background:#c4f0a9"></div>
<div class="t" style="left:2172.5px;top:575.8px;font-size:19.8px;color:#12230b;font-weight:400;">Not Rated</div>
<div class="a" style="left:849.5px;top:619.8px;width:1530px;height:1.5px;background:#303136"></div>
<div class="cb" style="left:962px;top:639.1px"></div>
<svg style="left:1032px;top:629.7px;" width="125" height="36" viewBox="0 0 125 36" fill="none"><path d="M6 0 H125 L109 18 L125 36 H6 A6 6 0 0 1 0 30 V6 A6 6 0 0 1 6 0 Z" fill="#4a4236"/></svg>
<svg style="left:1040px;top:638.0px;" width="22" height="22" viewBox="0 0 24 24" fill="none"><path d="M4.5 3.5 H8 L9.8 8.2 L7.5 10 C8.6 12.5 11.2 15.2 14 16.5 L15.8 14.2 L20.5 16 V19.5 A2 2 0 0 1 18.5 21.5 C10 21 3 14 2.5 5.5 A2 2 0 0 1 4.5 3.5 Z" stroke="#f59a48" stroke-width="2.2" stroke-linejoin="round"/></svg>
<div class="t" style="left:1068.0px;top:639.1px;font-size:18.2px;color:#f59a48;font-weight:700;-webkit-text-stroke:0.1px currentColor;">Today</div>
<div class="t" style="left:1226.0px;top:637.1px;font-size:21.3px;color:#e6e6e9;font-weight:400;">Priti Saxena</div>
<div class="t" style="left:1479.6px;top:637.0px;font-size:21.4px;color:#e6e6e9;font-weight:400;">Saxena Academy</div>
<div class="t" style="left:1739.5px;top:637.0px;font-size:21.4px;color:#e6e6e9;font-weight:400;">Noida</div>
<div class="t" style="left:1926.8px;top:636.9px;font-size:21.5px;color:#e6e6e9;font-weight:400;">Meta Ads</div>
<div class="a" style="left:2155.5px;top:637.0px;width:122.5px;height:33px;border-radius:17px;background:#c4f0a9"></div>
<div class="t" style="left:2172.5px;top:643.0px;font-size:19.8px;color:#12230b;font-weight:400;">Not Rated</div>
<div class="a" style="left:849.5px;top:687.0px;width:1530px;height:1.5px;background:#303136"></div>
<div class="cb" style="left:962px;top:706.4px"></div>
<svg style="left:1032px;top:697.0px;" width="125" height="36" viewBox="0 0 125 36" fill="none"><path d="M6 0 H125 L109 18 L125 36 H6 A6 6 0 0 1 0 30 V6 A6 6 0 0 1 6 0 Z" fill="#4a4236"/></svg>
<svg style="left:1040px;top:705.2px;" width="22" height="22" viewBox="0 0 24 24" fill="none"><path d="M4.5 3.5 H8 L9.8 8.2 L7.5 10 C8.6 12.5 11.2 15.2 14 16.5 L15.8 14.2 L20.5 16 V19.5 A2 2 0 0 1 18.5 21.5 C10 21 3 14 2.5 5.5 A2 2 0 0 1 4.5 3.5 Z" stroke="#f59a48" stroke-width="2.2" stroke-linejoin="round"/></svg>
<div class="t" style="left:1068.0px;top:706.3px;font-size:18.2px;color:#f59a48;font-weight:700;-webkit-text-stroke:0.1px currentColor;">Today</div>
<div class="t" style="left:1226.0px;top:704.3px;font-size:21.3px;color:#e6e6e9;font-weight:400;">Abhishek Rana</div>
<div class="t" style="left:1479.6px;top:704.2px;font-size:21.4px;color:#e6e6e9;font-weight:400;">Rana Infrastructure</div>
<div class="t" style="left:1739.5px;top:704.2px;font-size:21.4px;color:#e6e6e9;font-weight:400;">Dehradun</div>
<div class="t" style="left:1926.8px;top:704.2px;font-size:21.5px;color:#e6e6e9;font-weight:400;">Referral</div>
<div class="a" style="left:2155.5px;top:704.2px;width:122.5px;height:33px;border-radius:17px;background:#c4f0a9"></div>
<div class="t" style="left:2172.5px;top:710.3px;font-size:19.8px;color:#12230b;font-weight:400;">Not Rated</div>
<div class="a" style="left:849.5px;top:754.2px;width:1530px;height:1.5px;background:#303136"></div>
<div class="cb" style="left:962px;top:773.6px"></div>
<svg style="left:1032px;top:764.2px;" width="125" height="36" viewBox="0 0 125 36" fill="none"><path d="M6 0 H125 L109 18 L125 36 H6 A6 6 0 0 1 0 30 V6 A6 6 0 0 1 6 0 Z" fill="#4a4236"/></svg>
<svg style="left:1040px;top:772.5px;" width="22" height="22" viewBox="0 0 24 24" fill="none"><path d="M4.5 3.5 H8 L9.8 8.2 L7.5 10 C8.6 12.5 11.2 15.2 14 16.5 L15.8 14.2 L20.5 16 V19.5 A2 2 0 0 1 18.5 21.5 C10 21 3 14 2.5 5.5 A2 2 0 0 1 4.5 3.5 Z" stroke="#f59a48" stroke-width="2.2" stroke-linejoin="round"/></svg>
<div class="t" style="left:1068.0px;top:773.6px;font-size:18.2px;color:#f59a48;font-weight:700;-webkit-text-stroke:0.1px currentColor;">Today</div>
<div class="t" style="left:1226.0px;top:771.6px;font-size:21.3px;color:#e6e6e9;font-weight:400;">Shalini Sood</div>
<div class="t" style="left:1479.6px;top:771.5px;font-size:21.4px;color:#e6e6e9;font-weight:400;">Sood Healthcare</div>
<div class="t" style="left:1739.5px;top:771.5px;font-size:21.4px;color:#e6e6e9;font-weight:400;">Mumbai</div>
<div class="t" style="left:1926.8px;top:771.4px;font-size:21.5px;color:#e6e6e9;font-weight:400;">Google Organic</div>
<div class="a" style="left:2155.5px;top:771.5px;width:122.5px;height:33px;border-radius:17px;background:#c4f0a9"></div>
<div class="t" style="left:2172.5px;top:777.5px;font-size:19.8px;color:#12230b;font-weight:400;">Not Rated</div>
<div class="a" style="left:849.5px;top:821.5px;width:1530px;height:1.5px;background:#303136"></div>
<div class="cb" style="left:962px;top:840.9px"></div>
<svg style="left:1032px;top:831.5px;" width="125" height="36" viewBox="0 0 125 36" fill="none"><path d="M6 0 H125 L109 18 L125 36 H6 A6 6 0 0 1 0 30 V6 A6 6 0 0 1 6 0 Z" fill="#4a4236"/></svg>
<svg style="left:1040px;top:839.8px;" width="22" height="22" viewBox="0 0 24 24" fill="none"><path d="M4.5 3.5 H8 L9.8 8.2 L7.5 10 C8.6 12.5 11.2 15.2 14 16.5 L15.8 14.2 L20.5 16 V19.5 A2 2 0 0 1 18.5 21.5 C10 21 3 14 2.5 5.5 A2 2 0 0 1 4.5 3.5 Z" stroke="#f59a48" stroke-width="2.2" stroke-linejoin="round"/></svg>
<div class="t" style="left:1068.0px;top:840.8px;font-size:18.2px;color:#f59a48;font-weight:700;-webkit-text-stroke:0.1px currentColor;">Today</div>
<div class="t" style="left:1226.0px;top:838.8px;font-size:21.3px;color:#e6e6e9;font-weight:400;">Ritesh Arvind</div>
<div class="t" style="left:1479.6px;top:838.7px;font-size:21.4px;color:#e6e6e9;font-weight:400;">Arvind Engineering</div>
<div class="t" style="left:1739.5px;top:838.7px;font-size:21.4px;color:#e6e6e9;font-weight:400;">Surat</div>
<div class="t" style="left:1926.8px;top:838.7px;font-size:21.5px;color:#e6e6e9;font-weight:400;">Cold Call</div>
<div class="a" style="left:2155.5px;top:838.8px;width:122.5px;height:33px;border-radius:17px;background:#c4f0a9"></div>
<div class="t" style="left:2172.5px;top:844.8px;font-size:19.8px;color:#12230b;font-weight:400;">Not Rated</div>
<div class="a" style="left:849.5px;top:888.8px;width:1530px;height:1.5px;background:#303136"></div>
<div class="cb" style="left:962px;top:908.1px"></div>
<svg style="left:1032px;top:898.7px;" width="125" height="36" viewBox="0 0 125 36" fill="none"><path d="M6 0 H125 L109 18 L125 36 H6 A6 6 0 0 1 0 30 V6 A6 6 0 0 1 6 0 Z" fill="#4a4236"/></svg>
<svg style="left:1040px;top:907.0px;" width="22" height="22" viewBox="0 0 24 24" fill="none"><path d="M4.5 3.5 H8 L9.8 8.2 L7.5 10 C8.6 12.5 11.2 15.2 14 16.5 L15.8 14.2 L20.5 16 V19.5 A2 2 0 0 1 18.5 21.5 C10 21 3 14 2.5 5.5 A2 2 0 0 1 4.5 3.5 Z" stroke="#f59a48" stroke-width="2.2" stroke-linejoin="round"/></svg>
<div class="t" style="left:1068.0px;top:908.1px;font-size:18.2px;color:#f59a48;font-weight:700;-webkit-text-stroke:0.1px currentColor;">Today</div>
<div class="t" style="left:1226.0px;top:906.1px;font-size:21.3px;color:#e6e6e9;font-weight:400;">Tanvi Bhalla</div>
<div class="t" style="left:1479.6px;top:906.0px;font-size:21.4px;color:#e6e6e9;font-weight:400;">Bhalla Designers</div>
<div class="t" style="left:1739.5px;top:906.0px;font-size:21.4px;color:#e6e6e9;font-weight:400;">Delhi</div>
<div class="t" style="left:1926.8px;top:905.9px;font-size:21.5px;color:#e6e6e9;font-weight:400;">Website Form</div>
<div class="a" style="left:2155.5px;top:906.0px;width:122.5px;height:33px;border-radius:17px;background:#c4f0a9"></div>
<div class="t" style="left:2172.5px;top:912.0px;font-size:19.8px;color:#12230b;font-weight:400;">Not Rated</div>
<div class="a" style="left:849.5px;top:956.0px;width:1530px;height:1.5px;background:#303136"></div>
<div class="cb" style="left:962px;top:975.4px"></div>
<svg style="left:1032px;top:966.0px;" width="125" height="36" viewBox="0 0 125 36" fill="none"><path d="M6 0 H125 L109 18 L125 36 H6 A6 6 0 0 1 0 30 V6 A6 6 0 0 1 6 0 Z" fill="#4a4236"/></svg>
<svg style="left:1040px;top:974.2px;" width="22" height="22" viewBox="0 0 24 24" fill="none"><path d="M4.5 3.5 H8 L9.8 8.2 L7.5 10 C8.6 12.5 11.2 15.2 14 16.5 L15.8 14.2 L20.5 16 V19.5 A2 2 0 0 1 18.5 21.5 C10 21 3 14 2.5 5.5 A2 2 0 0 1 4.5 3.5 Z" stroke="#f59a48" stroke-width="2.2" stroke-linejoin="round"/></svg>
<div class="t" style="left:1068.0px;top:975.3px;font-size:18.2px;color:#f59a48;font-weight:700;-webkit-text-stroke:0.1px currentColor;">Today</div>
<div class="t" style="left:1226.0px;top:973.3px;font-size:21.3px;color:#e6e6e9;font-weight:400;">Akash Chandra</div>
<div class="t" style="left:1479.6px;top:973.2px;font-size:21.4px;color:#e6e6e9;font-weight:400;">Chandra IT Hub</div>
<div class="t" style="left:1739.5px;top:973.2px;font-size:21.4px;color:#e6e6e9;font-weight:400;">Bangalore</div>
<div class="t" style="left:1926.8px;top:973.2px;font-size:21.5px;color:#e6e6e9;font-weight:400;">LinkedIn</div>
<div class="a" style="left:2155.5px;top:973.2px;width:122.5px;height:33px;border-radius:17px;background:#c4f0a9"></div>
<div class="t" style="left:2172.5px;top:979.3px;font-size:19.8px;color:#12230b;font-weight:400;">Not Rated</div>
<div class="a" style="left:849.5px;top:1023.2px;width:1530px;height:1.5px;background:#303136"></div>
<div class="cb" style="left:962px;top:1042.6px"></div>
<svg style="left:1032px;top:1033.2px;" width="120" height="36" viewBox="0 0 120 36" fill="none"><path d="M6 0 H120 L104 18 L120 36 H6 A6 6 0 0 1 0 30 V6 A6 6 0 0 1 6 0 Z" fill="#304b3f"/></svg>
<svg style="left:1040px;top:1041.5px;" width="22" height="22" viewBox="0 0 24 24" fill="none"><path d="M4.5 3.5 H8 L9.8 8.2 L7.5 10 C8.6 12.5 11.2 15.2 14 16.5 L15.8 14.2 L20.5 16 V19.5 A2 2 0 0 1 18.5 21.5 C10 21 3 14 2.5 5.5 A2 2 0 0 1 4.5 3.5 Z" stroke="#54dd9d" stroke-width="2.2" stroke-linejoin="round"/></svg>
<div class="t" style="left:1068.0px;top:1042.6px;font-size:18.2px;color:#54dd9d;font-weight:700;-webkit-text-stroke:0.1px currentColor;">Mar 4</div>
<div class="t" style="left:1226.0px;top:1040.6px;font-size:21.3px;color:#e6e6e9;font-weight:400;">Pallavi Ghosh</div>
<div class="t" style="left:1479.6px;top:1040.5px;font-size:21.4px;color:#e6e6e9;font-weight:400;">Ghosh Textiles</div>
<div class="t" style="left:1739.5px;top:1040.5px;font-size:21.4px;color:#e6e6e9;font-weight:400;">Kolkata</div>
<div class="t" style="left:1926.8px;top:1040.4px;font-size:21.5px;color:#e6e6e9;font-weight:400;">Google Ads</div>
<div class="a" style="left:2155.5px;top:1040.5px;width:129px;height:33px;border-radius:17px;background:#95d87c"></div>
<div class="t" style="left:2172.5px;top:1046.5px;font-size:19.8px;color:#0e2209;font-weight:400;">Contacted</div>
<div class="a" style="left:849.5px;top:1090.5px;width:1530px;height:1.5px;background:#303136"></div>
<div class="cb" style="left:962px;top:1109.8px"></div>
<svg style="left:1032px;top:1100.5px;" width="120" height="36" viewBox="0 0 120 36" fill="none"><path d="M6 0 H120 L104 18 L120 36 H6 A6 6 0 0 1 0 30 V6 A6 6 0 0 1 6 0 Z" fill="#304b3f"/></svg>
<svg style="left:1040px;top:1108.8px;" width="22" height="22" viewBox="0 0 24 24" fill="none"><path d="M4.5 3.5 H8 L9.8 8.2 L7.5 10 C8.6 12.5 11.2 15.2 14 16.5 L15.8 14.2 L20.5 16 V19.5 A2 2 0 0 1 18.5 21.5 C10 21 3 14 2.5 5.5 A2 2 0 0 1 4.5 3.5 Z" stroke="#54dd9d" stroke-width="2.2" stroke-linejoin="round"/></svg>
<div class="t" style="left:1068.0px;top:1109.8px;font-size:18.2px;color:#54dd9d;font-weight:700;-webkit-text-stroke:0.1px currentColor;">Mar 4</div>
<div class="t" style="left:1226.0px;top:1107.8px;font-size:21.3px;color:#e6e6e9;font-weight:400;">Kunal Thakur</div>
<div class="t" style="left:1479.6px;top:1107.7px;font-size:21.4px;color:#e6e6e9;font-weight:400;">Thakur Realty</div>
<div class="t" style="left:1739.5px;top:1107.7px;font-size:21.4px;color:#e6e6e9;font-weight:400;">Bhopal</div>
<div class="t" style="left:1926.8px;top:1107.7px;font-size:21.5px;color:#e6e6e9;font-weight:400;">Referral</div>
<div class="a" style="left:2155.5px;top:1107.8px;width:112.5px;height:33px;border-radius:17px;background:#afdefa"></div>
<div class="t" style="left:2172.5px;top:1113.8px;font-size:19.8px;color:#0b1a2b;font-weight:400;">Missed 1</div>
<div class="a" style="left:849.5px;top:1157.8px;width:1530px;height:1.5px;background:#303136"></div>
<div class="cb" style="left:962px;top:1177.1px"></div>
<svg style="left:1032px;top:1167.7px;" width="120" height="36" viewBox="0 0 120 36" fill="none"><path d="M6 0 H120 L104 18 L120 36 H6 A6 6 0 0 1 0 30 V6 A6 6 0 0 1 6 0 Z" fill="#304b3f"/></svg>
<svg style="left:1040px;top:1176.0px;" width="22" height="22" viewBox="0 0 24 24" fill="none"><path d="M4.5 3.5 H8 L9.8 8.2 L7.5 10 C8.6 12.5 11.2 15.2 14 16.5 L15.8 14.2 L20.5 16 V19.5 A2 2 0 0 1 18.5 21.5 C10 21 3 14 2.5 5.5 A2 2 0 0 1 4.5 3.5 Z" stroke="#54dd9d" stroke-width="2.2" stroke-linejoin="round"/></svg>
<div class="t" style="left:1068.0px;top:1177.1px;font-size:18.2px;color:#54dd9d;font-weight:700;-webkit-text-stroke:0.1px currentColor;">Mar 4</div>
<div class="t" style="left:1226.0px;top:1175.1px;font-size:21.3px;color:#e6e6e9;font-weight:400;">Aarti Dubey</div>
<div class="t" style="left:1479.6px;top:1175.0px;font-size:21.4px;color:#e6e6e9;font-weight:400;">Dubey Advertising</div>
<div class="t" style="left:1739.5px;top:1175.0px;font-size:21.4px;color:#e6e6e9;font-weight:400;">Lucknow</div>
<div class="t" style="left:1926.8px;top:1174.9px;font-size:21.5px;color:#e6e6e9;font-weight:400;">Meta Ads</div>
<div class="a" style="left:2155.5px;top:1175.0px;width:112.5px;height:33px;border-radius:17px;background:#afdefa"></div>
<div class="t" style="left:2172.5px;top:1181.0px;font-size:19.8px;color:#0b1a2b;font-weight:400;">Missed 1</div>
<div class="a" style="left:849.5px;top:1225.0px;width:1530px;height:1.5px;background:#303136"></div>
<div class="cb" style="left:962px;top:1244.3px"></div>
<svg style="left:1032px;top:1235.0px;" width="120" height="36" viewBox="0 0 120 36" fill="none"><path d="M6 0 H120 L104 18 L120 36 H6 A6 6 0 0 1 0 30 V6 A6 6 0 0 1 6 0 Z" fill="#4c2c31"/></svg>
<svg style="left:1040px;top:1243.2px;" width="22" height="22" viewBox="0 0 24 24" fill="none"><path d="M4.5 3.5 H8 L9.8 8.2 L7.5 10 C8.6 12.5 11.2 15.2 14 16.5 L15.8 14.2 L20.5 16 V19.5 A2 2 0 0 1 18.5 21.5 C10 21 3 14 2.5 5.5 A2 2 0 0 1 4.5 3.5 Z" stroke="#f35a5e" stroke-width="2.2" stroke-linejoin="round"/></svg>
<div class="t" style="left:1068.0px;top:1244.3px;font-size:18.2px;color:#f35a5e;font-weight:700;-webkit-text-stroke:0.1px currentColor;">Mar 2</div>
<div class="t" style="left:1226.0px;top:1242.3px;font-size:21.3px;color:#e6e6e9;font-weight:400;">Hemant Bansal</div>
<div class="t" style="left:1479.6px;top:1242.2px;font-size:21.4px;color:#e6e6e9;font-weight:400;">Bansal Electronics</div>
<div class="t" style="left:1739.5px;top:1242.2px;font-size:21.4px;color:#e6e6e9;font-weight:400;">Indore</div>
<div class="t" style="left:1926.8px;top:1242.2px;font-size:21.5px;color:#e6e6e9;font-weight:400;">Trade Show</div>
<div class="a" style="left:2155.5px;top:1242.2px;width:122.5px;height:33px;border-radius:17px;background:#c4f0a9"></div>
<div class="t" style="left:2172.5px;top:1248.3px;font-size:19.8px;color:#12230b;font-weight:400;">Not Rated</div>
<div class="a" style="left:849.5px;top:1292.2px;width:1530px;height:1.5px;background:#303136"></div>
<div class="cb" style="left:962px;top:1311.6px"></div>
<svg style="left:1032px;top:1302.2px;" width="120" height="36" viewBox="0 0 120 36" fill="none"><path d="M6 0 H120 L104 18 L120 36 H6 A6 6 0 0 1 0 30 V6 A6 6 0 0 1 6 0 Z" fill="#304b3f"/></svg>
<svg style="left:1040px;top:1310.5px;" width="22" height="22" viewBox="0 0 24 24" fill="none"><path d="M4.5 3.5 H8 L9.8 8.2 L7.5 10 C8.6 12.5 11.2 15.2 14 16.5 L15.8 14.2 L20.5 16 V19.5 A2 2 0 0 1 18.5 21.5 C10 21 3 14 2.5 5.5 A2 2 0 0 1 4.5 3.5 Z" stroke="#54dd9d" stroke-width="2.2" stroke-linejoin="round"/></svg>
<div class="t" style="left:1068.0px;top:1311.6px;font-size:18.2px;color:#54dd9d;font-weight:700;-webkit-text-stroke:0.1px currentColor;">Mar 5</div>
<div class="t" style="left:1226.0px;top:1309.6px;font-size:21.3px;color:#e6e6e9;font-weight:400;">Divya Reddy</div>
<div class="t" style="left:1479.6px;top:1309.5px;font-size:21.4px;color:#e6e6e9;font-weight:400;">Reddy Diagnostics</div>
<div class="t" style="left:1739.5px;top:1309.5px;font-size:21.4px;color:#e6e6e9;font-weight:400;">Hyderabad</div>
<div class="t" style="left:1926.8px;top:1309.4px;font-size:21.5px;color:#e6e6e9;font-weight:400;">Website Chat</div>
<div class="a" style="left:2155.5px;top:1309.5px;width:151px;height:33px;border-radius:17px;background:#f6a46b"></div>
<div class="t" style="left:2172.5px;top:1315.5px;font-size:19.8px;color:#2a1406;font-weight:400;">Pre-Qualified</div>
<div class="a" style="left:849.5px;top:1359.5px;width:1530px;height:1.5px;background:#303136"></div>
<div class="cb" style="left:962px;top:1378.8px"></div>
<svg style="left:1032px;top:1369.5px;" width="120" height="36" viewBox="0 0 120 36" fill="none"><path d="M6 0 H120 L104 18 L120 36 H6 A6 6 0 0 1 0 30 V6 A6 6 0 0 1 6 0 Z" fill="#4c2c31"/></svg>
<svg style="left:1040px;top:1377.8px;" width="22" height="22" viewBox="0 0 24 24" fill="none"><path d="M4.5 3.5 H8 L9.8 8.2 L7.5 10 C8.6 12.5 11.2 15.2 14 16.5 L15.8 14.2 L20.5 16 V19.5 A2 2 0 0 1 18.5 21.5 C10 21 3 14 2.5 5.5 A2 2 0 0 1 4.5 3.5 Z" stroke="#f35a5e" stroke-width="2.2" stroke-linejoin="round"/></svg>
<div class="t" style="left:1068.0px;top:1378.8px;font-size:18.2px;color:#f35a5e;font-weight:700;-webkit-text-stroke:0.1px currentColor;">Mar 2</div>
<div class="t" style="left:1226.0px;top:1376.8px;font-size:21.3px;color:#e6e6e9;font-weight:400;">Saurabh Kulkarni</div>
<div class="t" style="left:1479.6px;top:1376.7px;font-size:21.4px;color:#e6e6e9;font-weight:400;">Kulkarni Tech</div>
<div class="t" style="left:1739.5px;top:1376.7px;font-size:21.4px;color:#e6e6e9;font-weight:400;">Pune</div>
<div class="t" style="left:1926.8px;top:1376.7px;font-size:21.5px;color:#e6e6e9;font-weight:400;">Google Organic</div>
<div class="a" style="left:2155.5px;top:1376.8px;width:122.5px;height:33px;border-radius:17px;background:#c4f0a9"></div>
<div class="t" style="left:2172.5px;top:1382.8px;font-size:19.8px;color:#12230b;font-weight:400;">Not Rated</div>
<div class="a" style="left:849.5px;top:1426.8px;width:1530px;height:1.5px;background:#303136"></div>
<div class="cb" style="left:962px;top:1446.1px"></div>
<svg style="left:1032px;top:1436.7px;" width="120" height="36" viewBox="0 0 120 36" fill="none"><path d="M6 0 H120 L104 18 L120 36 H6 A6 6 0 0 1 0 30 V6 A6 6 0 0 1 6 0 Z" fill="#304b3f"/></svg>
<svg style="left:1040px;top:1445.0px;" width="22" height="22" viewBox="0 0 24 24" fill="none"><path d="M4.5 3.5 H8 L9.8 8.2 L7.5 10 C8.6 12.5 11.2 15.2 14 16.5 L15.8 14.2 L20.5 16 V19.5 A2 2 0 0 1 18.5 21.5 C10 21 3 14 2.5 5.5 A2 2 0 0 1 4.5 3.5 Z" stroke="#54dd9d" stroke-width="2.2" stroke-linejoin="round"/></svg>
<div class="t" style="left:1068.0px;top:1446.1px;font-size:18.2px;color:#54dd9d;font-weight:700;-webkit-text-stroke:0.1px currentColor;">Mar 6</div>
<div class="t" style="left:1226.0px;top:1444.1px;font-size:21.3px;color:#e6e6e9;font-weight:400;">Naina Talwar</div>
<div class="t" style="left:1479.6px;top:1444.0px;font-size:21.4px;color:#e6e6e9;font-weight:400;">Talwar Decor</div>
<div class="t" style="left:1739.5px;top:1444.0px;font-size:21.4px;color:#e6e6e9;font-weight:400;">Delhi</div>
<div class="t" style="left:1926.8px;top:1443.9px;font-size:21.5px;color:#e6e6e9;font-weight:400;">Meta Ads</div>
<div class="a" style="left:2155.5px;top:1444.0px;width:151px;height:33px;border-radius:17px;background:#f6a46b"></div>
<div class="t" style="left:2172.5px;top:1450.0px;font-size:19.8px;color:#2a1406;font-weight:400;">Pre-Qualified</div>
<div class="a" style="left:849.5px;top:1494px;width:1538px;height:2px;background:#3a3b40"></div>
<div class="t" style="left:873.0px;top:1508.2px;font-size:21px;color:#bdbdc1;font-weight:400;">Total Records 1,000</div>
<div class="t" style="left:2205.0px;top:1508.2px;font-size:21px;color:#bdbdc1;font-weight:400;">1 - 100</div>
</div></body></html>
